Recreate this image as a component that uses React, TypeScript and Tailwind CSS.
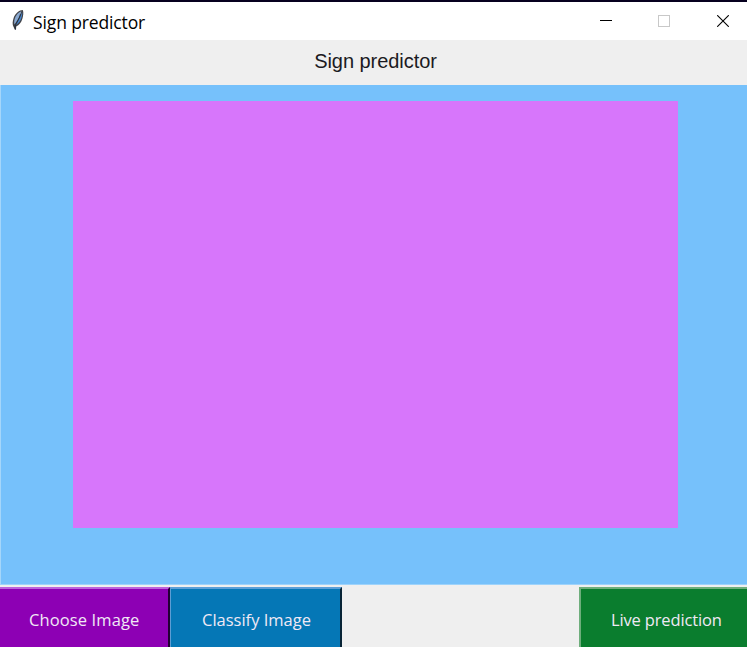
import React from "react";

function Feather() {
  return (
    <svg className="block h-[22px] w-[15px]" viewBox="0 0 15 22">
      <path d="M12.800 1C9.400 1 5.200 4.400 3.600 9c-1.100 3.400-1.400 6.600-.1 8.800L4.800 20.600l1.200.2.200-3.200c3-1.400 5-4 6.200-7.800.8-2.800 1.400-6.200.4-8.800z" fill="#2c2d33" opacity=".9" />
      <path d="M11.400 2.200C8.200 3.200 5.600 6.600 4.600 10.200c-.5 2-.5 3.800-.1 5.400C7.600 11 10 7.500 11.400 2.200z" fill="#8aa9d0" />
      <path d="M12.200 3c-1.500 4.600-3.800 9-6.800 13 2.800-1.200 4.900-3.800 5.800-6.600.8-2.400 1.300-4.400 1-6.400z" fill="#4684cc" />
      <path d="M10.500 5C9.500 9 7 13 5 17l.3 3.500" fill="none" stroke="#1c2838" strokeWidth=".8" />
    </svg>
  );
}

function TitleBar() {
  return (
    <header className="flex h-10 shrink-0 items-start border-t-2 border-[#06001f] bg-white">
      <div className="ml-[10px] mt-[7px] w-[15px]">
        <Feather />
      </div>
      <h1 className="ml-[8px] mt-[7px] whitespace-nowrap font-['Open_Sans','Noto_Sans',sans-serif] text-[17.500px] leading-[27px] tracking-[-0.13px] text-black">
        Sign predictor
      </h1>
      <div className="ml-auto mr-[18px] mt-[13px] flex">
        <svg className="mr-[46px] h-3 w-3" viewBox="0 0 12 12" shapeRendering="crispEdges">
          <path d="M0 5.500h12" stroke="#000" />
        </svg>
        <svg className="mr-[47px] h-3 w-3" viewBox="0 0 12 12" shapeRendering="crispEdges">
          <rect x=".5" y=".5" width="11" height="11" fill="none" stroke="#c8c8c8" />
        </svg>
        <svg className="h-3 w-3" viewBox="0 0 12 12">
          <path d="M.2.2l11.600 11.600M11.800.2L.2 11.800" stroke="#000" strokeWidth="1.100" />
        </svg>
      </div>
    </header>
  );
}

export default function App() {
  return (
    <div className="flex h-[647px] w-[747px] flex-col overflow-hidden bg-[#efefef]">
      <TitleBar />
      <div className="flex h-[45px] shrink-0 justify-center pl-[4px] font-['Liberation_Sans',Arial,sans-serif] text-[20px] leading-[43px] text-[#1b1a22]">
        <span className="tracking-[-0.05px]">Sign predictor</span>
      </div>
      <main className="h-[500px] shrink-0 border-b border-l border-b-[#9ed3fb] border-l-[#a5d6fa] bg-[#76c1fb] pl-[72px] pt-4">
        <div className="h-[427px] w-[605px] bg-[#d776fb]" />
      </main>
      <footer className="mt-[2px] flex h-[60px] shrink-0 font-['Open_Sans','Noto_Sans',sans-serif] text-[16.500px] leading-[61px] text-[#f0e9f5]">
        <button className="h-[60px] w-[170px] shrink-0 border-r-2 border-t-2 border-r-[#220033] border-t-[#bb62dc] bg-[#8d00b4] pl-[29px] text-left">
          <span className="whitespace-nowrap tracking-[0.12px]">Choose Image</span>
        </button>
        <button className="h-[60px] w-[172px] shrink-0 border-l border-r-2 border-t-2 border-l-[#5c9dd4] border-r-[#082436] border-t-[#5b9fd8] bg-[#0577b6] pl-[31px] text-left">
          <span className="whitespace-nowrap">Classify Image</span>
        </button>
        <button className="ml-auto h-[60px] w-[168px] shrink-0 border-l-2 border-t-2 border-l-[#6eae7c] border-t-[#6eae7c] bg-[#0a7d2e] pl-[30px] text-left">
          <span className="whitespace-nowrap tracking-[-0.15px]">Live prediction</span>
        </button>
      </footer>
    </div>
  );
}
